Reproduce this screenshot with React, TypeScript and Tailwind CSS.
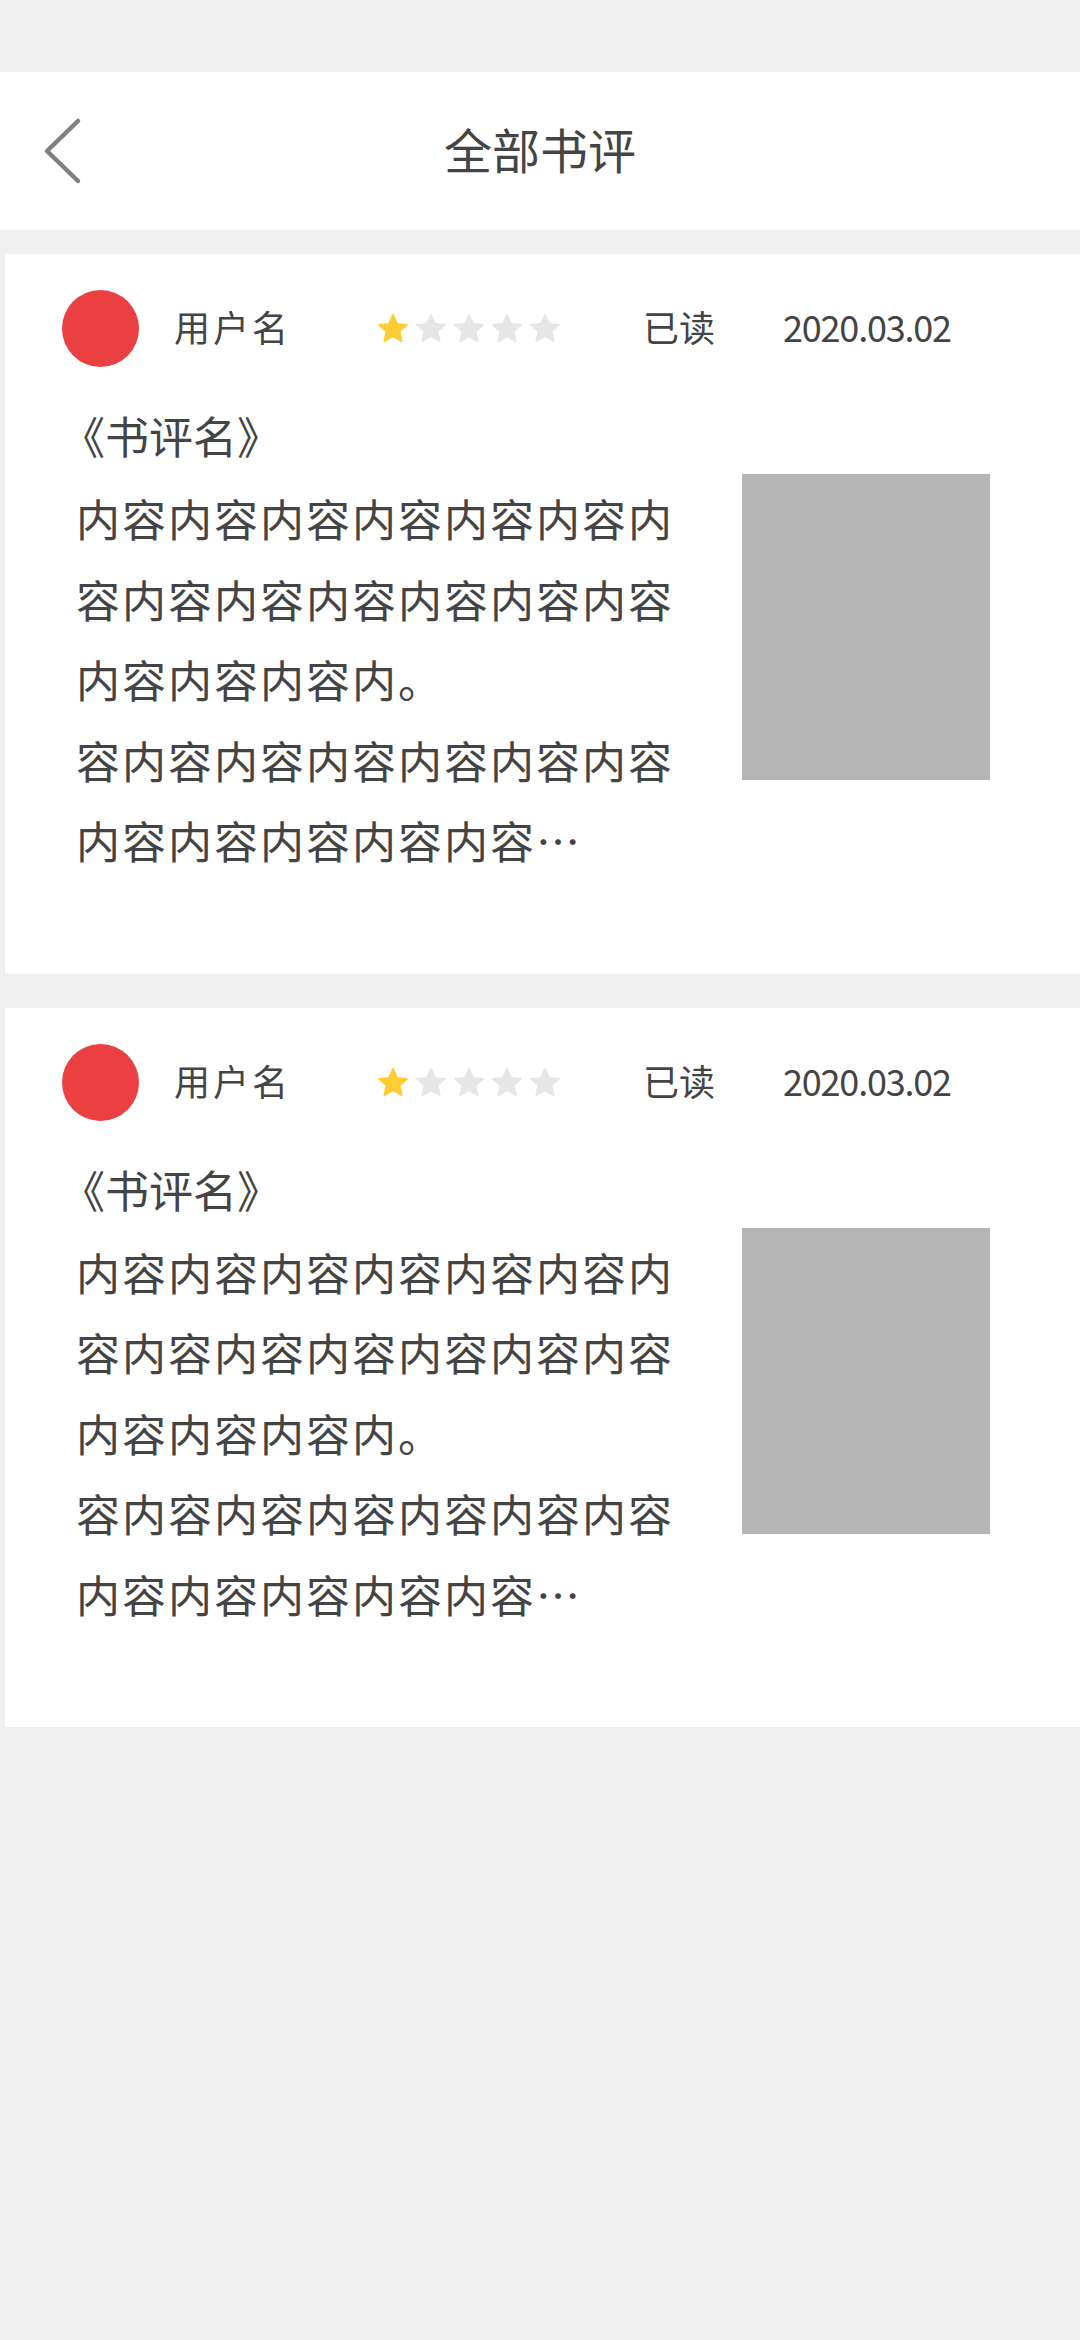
import React from "react";

const FONT = '"Noto Sans CJK SC", "Noto Sans", sans-serif';

function Star({ filled }: { filled: boolean }) {
  return (
    <svg width="30" height="29" viewBox="2 2.2 20 19" className="block">
      <path
        d="M12 2.6l2.75 6.02 6.55.62-4.93 4.39 1.44 6.48L12 16.8l-5.81 3.31 1.44-6.48L2.7 9.24l6.55-.62z"
        fill={filled ? "#ffcc33" : "#e6e6e6"}
        stroke={filled ? "#ffcc33" : "#e6e6e6"}
        strokeWidth="1.2"
        strokeLinejoin="round"
      />
    </svg>
  );
}

function Card() {
  const lines = [
    "内容内容内容内容内容内容内",
    "容内容内容内容内容内容内容",
    "内容内容内容内。",
    "容内容内容内容内容内容内容",
    "内容内容内容内容内容…",
  ];
  return (
    <div className="ml-[5px] bg-white pt-[36px] pb-[93px]">
      <div className="flex items-center h-[77px]">
        <div className="ml-[57px] w-[77px] h-[77px] rounded-full bg-[#ea4042]" />
        <div className="ml-[35px] w-[108px] pb-[5px] text-[36px] leading-none tracking-[3px] text-[#444444] whitespace-nowrap">
          用户名
        </div>
        <div className="ml-[96px] flex gap-[8px]">
          <Star filled />
          <Star filled={false} />
          <Star filled={false} />
          <Star filled={false} />
          <Star filled={false} />
        </div>
        <div className="ml-[83px] pb-[5px] text-[36px] leading-none text-[#444444]">已读</div>
        <div className="ml-[68px] pb-[5px] text-[36px] leading-none text-[#444444] tracking-[-1.2px]">
          2020.03.02
        </div>
      </div>
      <div className="flex">
        <div className="flex flex-col">
          <div className="mt-[31px] ml-[56px] text-[44px] leading-[74px] text-[#444444] whitespace-nowrap">
            《书评名》
          </div>
          <div className="mt-[6px] ml-[71px] text-[44px] leading-[80.5px] tracking-[2px] text-[#444444]">
            {lines.map((l, i) => (
              <div key={i} className="whitespace-nowrap">
                {l}
              </div>
            ))}
          </div>
        </div>
        <div className="ml-auto mr-[90px] mt-[107px] w-[248px] h-[306px] bg-[#b5b5b5]" />
      </div>
    </div>
  );
}

export default function App() {
  return (
    <div className="min-h-[2340px] w-[1080px] bg-[#efefef]" style={{ fontFamily: FONT }}>
      <div className="h-[72px]" />
      <div className="h-[158px] bg-white grid grid-cols-[1fr_auto_1fr] items-center">
        <div className="pl-[40px]">
          <svg width="44" height="70" viewBox="0 0 44 70" className="block">
            <path
              d="M38 5 L7 35 L38 65"
              fill="none"
              stroke="#7f7f7f"
              strokeWidth="4.5"
              strokeLinecap="round"
              strokeLinejoin="round"
            />
          </svg>
        </div>
        <div className="pb-[6px] text-[48px] leading-none text-[#444444]">全部书评</div>
        <div />
      </div>
      <div className="h-[24px]" />
      <Card />
      <div className="h-[34px]" />
      <Card />
    </div>
  );
}
